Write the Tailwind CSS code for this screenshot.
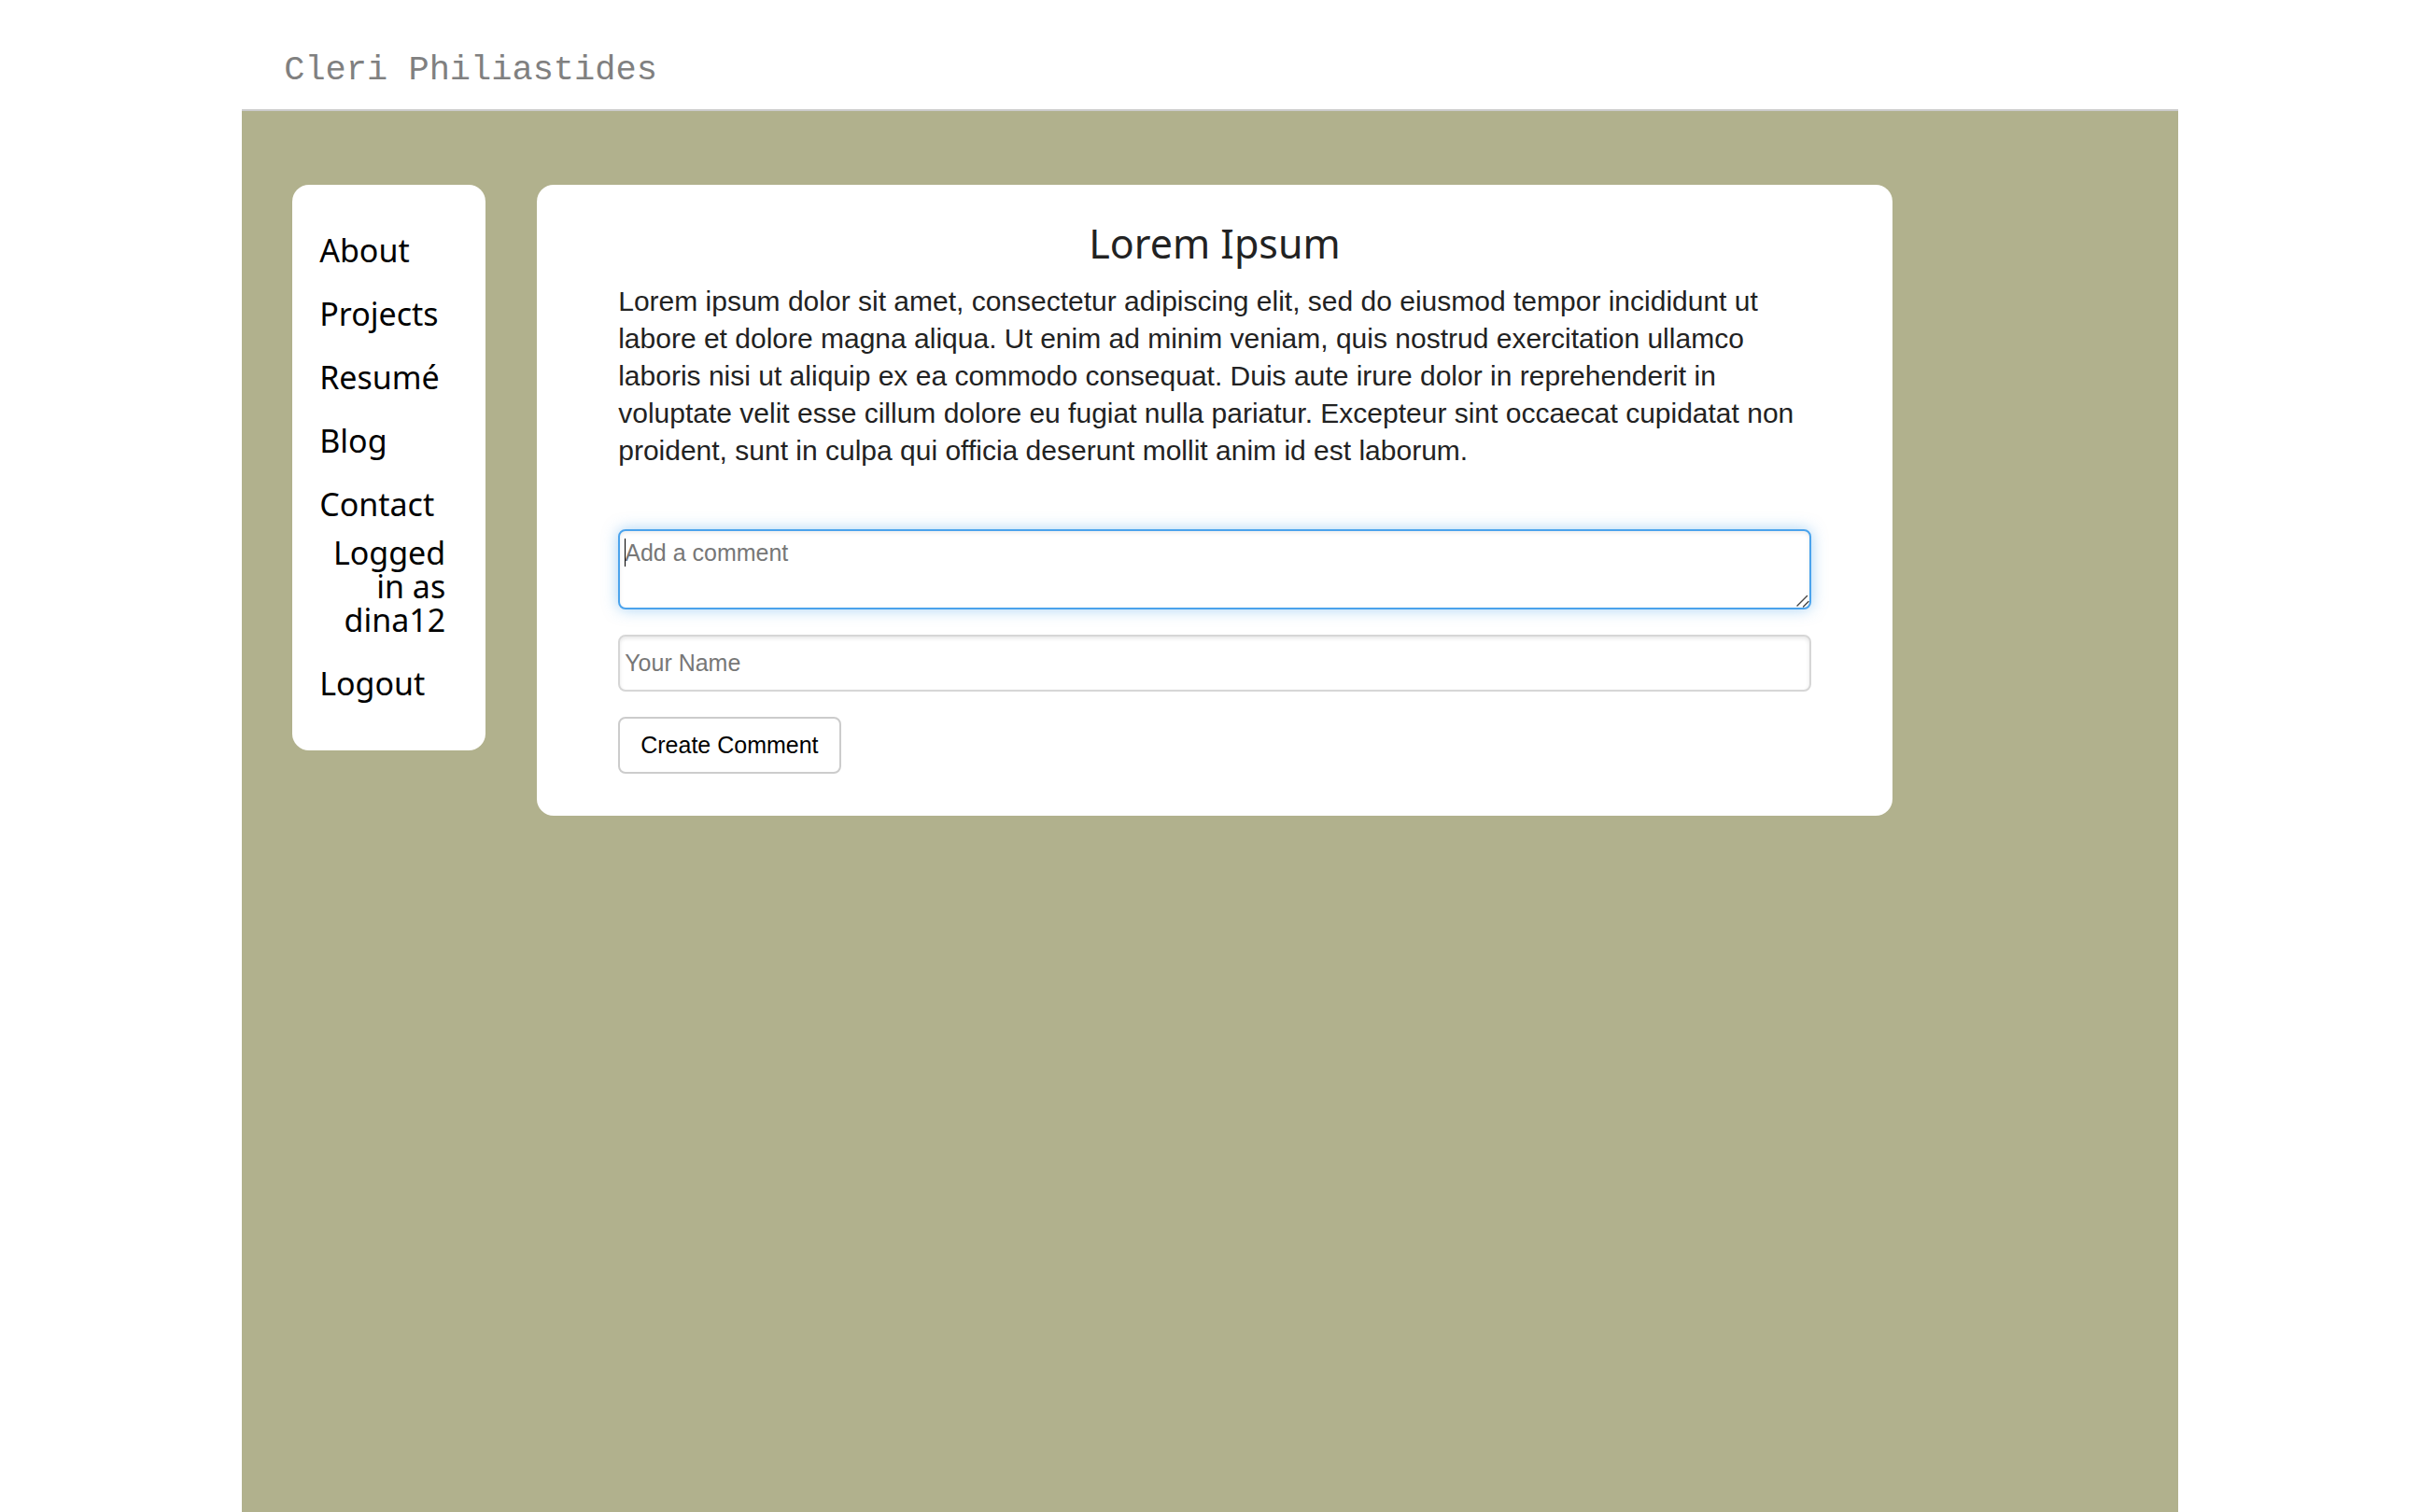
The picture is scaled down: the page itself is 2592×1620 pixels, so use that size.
<!DOCTYPE html>
<html lang="en">
<head>
<meta charset="utf-8">
<title>Cleri Philiastides</title>
<script src="https://cdn.jsdelivr.net/npm/@tailwindcss/browser@4"></script>
</head>
<body class="bg-white">
<div class="mx-auto flex min-h-screen w-4/5 flex-col">
  <header class="border-b-2 border-[#cccccc] px-[45px] pt-[53px] pb-5">
    <a href="#" class="block font-['Liberation_Mono',monospace] text-[37px] leading-[44px] text-[#808080]">Cleri Philiastides</a>
  </header>
  <div class="flex flex-1 items-start gap-[55px] bg-[#b1b18d] pt-[79px] pr-[54px] pb-16 pl-[54px]">
    <nav class="w-[207px] shrink-0 rounded-[18px] bg-white pt-9 pr-[43px] pb-[38px] pl-[29px] font-['Noto_Sans',sans-serif] text-[34px] leading-9 text-black">
      <ul>
        <li class="py-4"><a href="#">About</a></li>
        <li class="py-4"><a href="#">Projects</a></li>
        <li class="py-4"><a href="#">Resumé</a></li>
        <li class="py-4"><a href="#">Blog</a></li>
        <li class="py-4"><a href="#">Contact</a></li>
        <li class="pb-4 text-right">Logged in as dina12</li>
        <li class="py-4"><a href="#">Logout</a></li>
      </ul>
    </nav>
    <main class="w-[56vw] rounded-[18px] bg-white px-[87px] pt-[35px] pb-[45px]">
      <h1 class="text-center font-['Noto_Sans',sans-serif] text-[43px] leading-[56px] text-[#222222]">Lorem Ipsum</h1>
      <p class="mt-[14px] font-['Liberation_Sans',sans-serif] text-[30px] leading-10 text-[#222222]">Lorem ipsum dolor sit amet, consectetur adipiscing elit, sed do eiusmod tempor incididunt ut labore et dolore magna aliqua. Ut enim ad minim veniam, quis nostrud exercitation ullamco laboris nisi ut aliquip ex ea commodo consequat. Duis aute irure dolor in reprehenderit in voluptate velit esse cillum dolore eu fugiat nulla pariatur. Excepteur sint occaecat cupidatat non proident, sunt in culpa qui officia deserunt mollit anim id est laborum.</p>
      <form class="mt-16 flex flex-col items-start gap-[27px] font-['Liberation_Sans',sans-serif] text-[25px]">
        <div class="relative w-full">
          <textarea aria-label="Add a comment" placeholder="Add a comment" class="block h-[86px] w-full resize-none rounded-lg border-2 border-[#4ba3ec] bg-white px-[5px] py-[7px] leading-8 shadow-[0_0_16px_rgba(82,168,236,0.5),inset_0_2px_4px_rgba(0,0,0,0.08)] outline-none placeholder:text-[#777777]"></textarea>
          <span class="absolute top-[10px] left-[7px] h-[30px] w-px bg-black"></span>
          <svg class="absolute right-[3px] bottom-[3px] size-3" viewBox="0 0 12 12" fill="none" stroke="#444444" stroke-width="1.4" stroke-linecap="round" overflow="visible" aria-hidden="true"><path d="M0 11L10.500 0.500M6.500 12L12 6.500"/></svg>
        </div>
        <input type="text" aria-label="Your Name" placeholder="Your Name" class="h-[61px] w-full rounded-lg border-2 border-[#d6d6d6] bg-white px-[5px] shadow-[inset_0_2px_4px_rgba(0,0,0,0.1)] placeholder:text-[#777777]">
        <button type="button" class="h-[61px] rounded-lg border-2 border-[#cccccc] bg-white px-[22px] text-black">Create Comment</button>
      </form>
    </main>
  </div>
</div>
</body>
</html>
